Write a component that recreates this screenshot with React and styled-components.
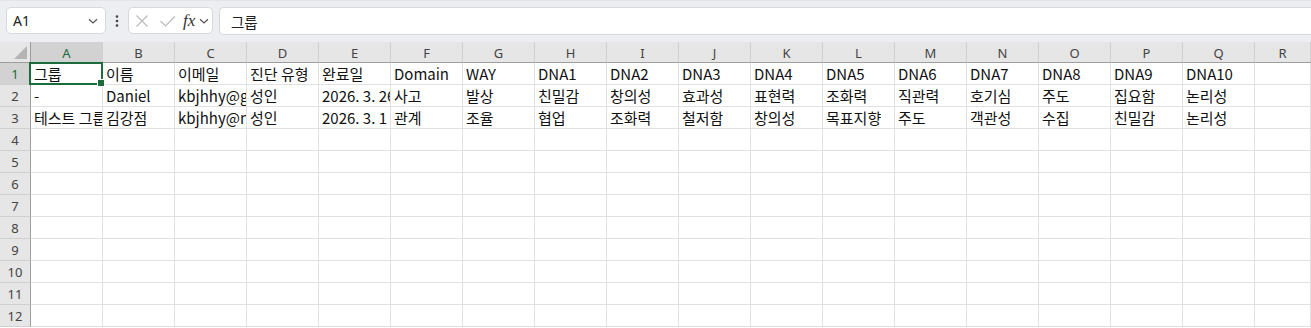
import React from "react";
import styled, { createGlobalStyle } from "styled-components";

const Global = createGlobalStyle`
  html, body { margin: 0; padding: 0; background: #ffffff; }
  body { font-family: "Noto Sans CJK KR", "Noto Sans", sans-serif; overflow: hidden; }
`;

const Page = styled.div`
  width: 1311px;
  height: 328px;
  display: flex;
  flex-direction: column;
  overflow: hidden;
`;

const Toolbar = styled.div`
  height: 42px;
  box-sizing: border-box;
  background: #eceef1;
  border-top: 1px solid #e2e4e7;
  display: flex;
  align-items: flex-start;
  padding: 6px 0 0 6px;
`;

const NameBox = styled.div`
  width: 100px;
  height: 27px;
  box-sizing: border-box;
  background: #fff;
  border: 1px solid #d6d8db;
  border-radius: 5px;
  display: flex;
  align-items: center;
  justify-content: space-between;
  padding: 0 6px 0 6px;
  font-family: "Noto Sans", sans-serif;
  font-size: 14px;
  color: #222;
`;

const Dots = styled.div`
  width: 22px;
  height: 27px;
  display: flex;
  align-items: center;
  justify-content: center;
`;

const FxBox = styled.div`
  width: 85px;
  height: 27px;
  box-sizing: border-box;
  background: #fff;
  border: 1px solid #d6d8db;
  border-radius: 5px;
  display: flex;
  align-items: center;
  padding: 0 0 0 5px;
  gap: 3px;
`;

const Fx = styled.span`
  font-family: "Liberation Serif", serif;
  font-style: italic;
  font-size: 17px;
  color: #333;
  margin-left: 2px;
  line-height: 1;
`;

const FormulaInput = styled.div`
  flex: 1;
  margin-left: 6px;
  height: 28px;
  box-sizing: border-box;
  background: #fff;
  border: 1px solid #d6d8db;
  border-right: none;
  border-radius: 5px 0 0 5px;
  display: flex;
  align-items: center;
  padding-left: 11px;
  font-size: 14.5px;
  color: #222;
`;

const Grid = styled.div`
  display: grid;
  grid-template-columns: 31px repeat(17, 72px) 1fr;
  grid-auto-rows: 22px;
  grid-template-rows: 21px;
  flex: 1;
  background: #fff;
`;

const Corner = styled.div`
  background: #e6e6e6;
  border-right: 1px solid #9e9e9e;
  border-bottom: 1px solid #9e9e9e;
  box-sizing: border-box;
  position: relative;
`;

const CornerTri = styled.div`
  position: absolute;
  right: 3px;
  bottom: 3px;
  width: 0;
  height: 0;
  border-left: 13px solid transparent;
  border-bottom: 13px solid #b4b4b4;
`;

const ColHead = styled.div`
  background: ${(p) => (p.$sel ? "#d2d2d2" : "#e6e6e6")};
  color: ${(p) => (p.$sel ? "#1c6b3d" : "#444")};
  border-right: 1px solid #d0d0d0;
  border-bottom: 1px solid ${(p) => (p.$sel ? "#1c6b3d" : "#9e9e9e")};
  box-sizing: border-box;
  display: flex;
  align-items: center;
  justify-content: center;
  font-family: "Noto Sans", sans-serif;
  font-size: 13px;
  padding-top: 1px;
`;

const RowHead = styled.div`
  background: ${(p) => (p.$sel ? "#d2d2d2" : "#e6e6e6")};
  color: ${(p) => (p.$sel ? "#1c6b3d" : "#444")};
  border-right: 1px solid ${(p) => (p.$sel ? "#1c6b3d" : "#9e9e9e")};
  border-bottom: 1px solid #d0d0d0;
  box-sizing: border-box;
  display: flex;
  align-items: center;
  justify-content: center;
  font-family: "Noto Sans", sans-serif;
  font-size: 13px;
`;

const Cell = styled.div`
  border-right: 1px solid #e1e1e1;
  border-bottom: 1px solid #e1e1e1;
  box-sizing: border-box;
  padding: 0 0 0 3px;
  display: flex;
  align-items: center;
  white-space: nowrap;
  overflow: hidden;
  font-size: 15px;
  color: #111;
  position: relative;
`;

const ActiveCell = styled(Cell)`
  overflow: visible;
  z-index: 2;
`;

const Selection = styled.div`
  position: absolute;
  left: -2px;
  top: -1px;
  right: -1px;
  bottom: -1px;
  border: 2px solid #1c6b3d;
  pointer-events: none;
`;

const Handle = styled.div`
  position: absolute;
  right: -4px;
  bottom: -4px;
  width: 6px;
  height: 6px;
  background: #1c6b3d;
  border: 1px solid #fff;
`;

const CellText = styled.span`
  overflow: hidden;
  display: block;
  line-height: 22px;
`;

const cols = "ABCDEFGHIJKLMNOPQR".split("");

const data = [
  ["그룹", "이름", "이메일", "진단 유형", "완료일", "Domain", "WAY", "DNA1", "DNA2", "DNA3", "DNA4", "DNA5", "DNA6", "DNA7", "DNA8", "DNA9", "DNA10", ""],
  ["-", "Daniel", "kbjhhy@gmail.com", "성인", "2026. 3. 26", "사고", "발상", "친밀감", "창의성", "효과성", "표현력", "조화력", "직관력", "호기심", "주도", "집요함", "논리성", ""],
  ["테스트 그룹", "김강점", "kbjhhy@naver.com", "성인", "2026. 3. 1", "관계", "조율", "협업", "조화력", "철저함", "창의성", "목표지향", "주도", "객관성", "수집", "친밀감", "논리성", ""],
];

const Chevron = () => (
  <svg width="12" height="12" viewBox="0 0 12 12">
    <path d="M2 4.2 L6 8 L10 4.2" fill="none" stroke="#555" strokeWidth="1.2" />
  </svg>
);

export default function App() {
  const rows = [];
  for (let r = 0; r < 12; r++) rows.push(data[r] || cols.map(() => ""));
  return (
    <Page>
      <Global />
      <Toolbar>
        <NameBox>
          <span>A1</span>
          <Chevron />
        </NameBox>
        <Dots>
          <svg width="4" height="14" viewBox="0 0 4 14">
            <circle cx="2" cy="2.5" r="1.3" fill="#444" />
            <circle cx="2" cy="7" r="1.3" fill="#444" />
            <circle cx="2" cy="11.5" r="1.3" fill="#444" />
          </svg>
        </Dots>
        <FxBox>
          <svg width="16" height="16" viewBox="0 0 16 16">
            <path d="M2.5 2.5 L13.5 13.5 M13.5 2.5 L2.5 13.5" stroke="#b9b9b9" strokeWidth="1.1" fill="none" />
          </svg>
          <svg width="20" height="16" viewBox="0 0 20 16" style={{ marginLeft: 5 }}>
            <path d="M2.5 8 L7.5 13 L17 3.5" stroke="#b9b9b9" strokeWidth="1.1" fill="none" />
          </svg>
          <Fx>fx</Fx>
          <Chevron />
        </FxBox>
        <FormulaInput>그룹</FormulaInput>
      </Toolbar>
      <Grid>
        <Corner>
          <CornerTri />
        </Corner>
        {cols.map((c, i) => (
          <ColHead key={c} $sel={i === 0}>
            {c}
          </ColHead>
        ))}
        {rows.map((row, r) => (
          <React.Fragment key={r}>
            <RowHead $sel={r === 0}>{r + 1}</RowHead>
            {row.map((v, c) =>
              r === 0 && c === 0 ? (
                <ActiveCell key={c}>
                  <CellText>{v}</CellText>
                  <Selection>
                    <Handle />
                  </Selection>
                </ActiveCell>
              ) : (
                <Cell key={c}>
                  <CellText>{v}</CellText>
                </Cell>
              )
            )}
          </React.Fragment>
        ))}
      </Grid>
    </Page>
  );
}
